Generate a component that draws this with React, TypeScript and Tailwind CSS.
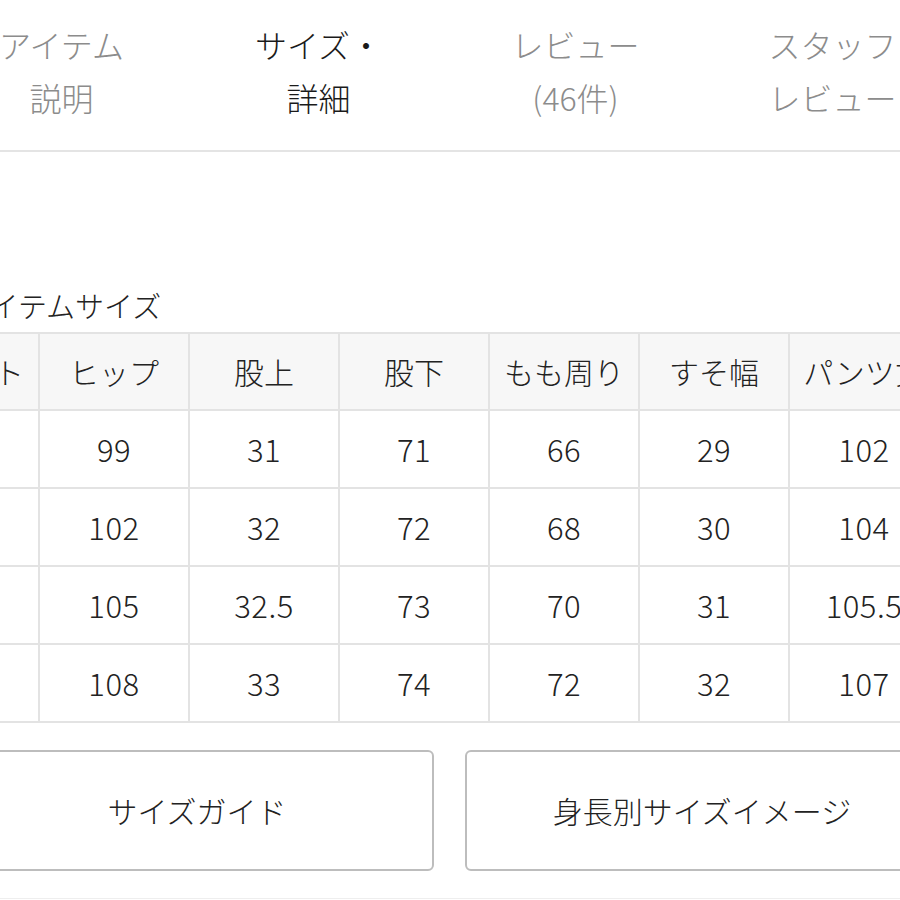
const tabs = [
  { lines: ["アイテム", "説明"], active: false },
  { lines: ["サイズ・", "詳細"], active: true },
  { lines: ["レビュー", "(46件)"], active: false },
  { lines: ["スタッフ", "レビュー"], active: false },
];

const headers = ["ウエスト", "ヒップ", "股上", "股下", "もも周り", "すそ幅", "パンツ丈"];

const rows = [
  ["", "99", "31", "71", "66", "29", "102"],
  ["", "102", "32", "72", "68", "30", "104"],
  ["", "105", "32.5", "73", "70", "31", "105.5"],
  ["", "108", "33", "74", "72", "32", "107"],
];

function Tabs() {
  return (
    <nav className="flex h-[152px] border-b-2 border-[#e4e4e4]">
      {tabs.map((t) => (
        <div key={t.lines[0] + t.lines[1]} className="flex w-[257px] flex-col items-center pt-[18px]">
          {t.lines.map((l) => (
            <span
              key={l}
              className={`text-[32px] leading-[53px] ${t.active ? "text-[#1a1a1a]" : "text-[#8c8c8c]"}`}
            >
              {l}
            </span>
          ))}
          {t.active && <div className="mt-[26px] h-[3px] w-[205px] bg-[#111]" />}
        </div>
      ))}
    </nav>
  );
}

function SizeTable() {
  return (
    <div className="ml-[-70px] grid w-max grid-cols-[repeat(7,150px)] border-t-2 border-[#e3e3e3] text-[30px] text-[#222]">
      {headers.map((h) => (
        <div
          key={h}
          className="flex h-[77px] items-center justify-center border-r-2 border-b-2 border-[#e3e3e3] bg-[#f7f7f7] whitespace-nowrap"
        >
          {h}
        </div>
      ))}
      {rows.map((r, i) =>
        r.map((v, j) => (
          <div
            key={i + "-" + j}
            className="flex h-[78px] items-center justify-center border-r-2 border-b-2 border-[#e3e3e3] text-[31px] tracking-[0.5px] whitespace-nowrap"
          >
            {v}
          </div>
        ))
      )}
    </div>
  );
}

export default function App() {
  return (
    <div
      className="h-[900px] w-[900px] overflow-hidden bg-white font-light"
      style={{ fontFamily: '"Noto Sans CJK JP", "Noto Sans", sans-serif' }}
    >
      <div className="ml-[-64px] w-[1028px]">
        <div className="ml-[-3px]">
          <Tabs />
        </div>
        <section className="px-[24px]">
          <h2 className="mt-[133px] ml-[2px] text-[29px] leading-[40px] text-[#222]">アイテムサイズ</h2>
          <div className="mt-[7px]">
            <SizeTable />
          </div>
          <div className="mt-[27px] grid w-[979px] grid-cols-2 gap-[31px]">
            <button className="flex h-[121px] items-center justify-center rounded-[6px] border-2 border-[#bdbdbd] text-[30px] text-[#222]">
              サイズガイド
            </button>
            <button className="flex h-[121px] items-center justify-center rounded-[6px] border-2 border-[#bdbdbd] text-[30px] text-[#222]">
              身長別サイズイメージ
            </button>
          </div>
          <div className="mt-[27px] border-t border-[#eeeeee]" />
        </section>
      </div>
    </div>
  );
}
